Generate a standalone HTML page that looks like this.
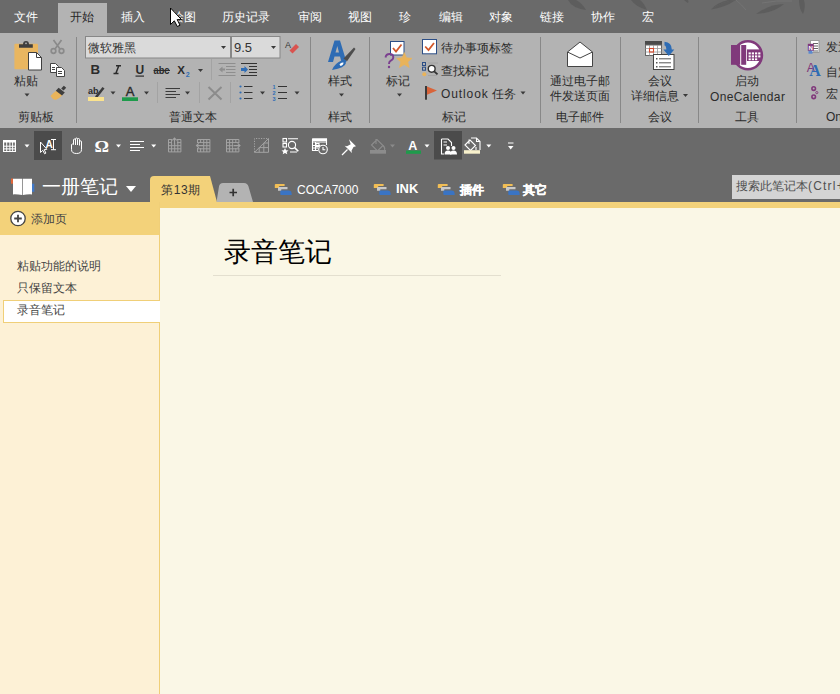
<!DOCTYPE html>
<html><head><meta charset="utf-8">
<style>
*{margin:0;padding:0;box-sizing:border-box}
html,body{width:840px;height:694px;overflow:hidden;background:#faf7e6;font-family:"Liberation Sans",sans-serif;}
.a{position:absolute}
.t{position:absolute;font-size:12px;line-height:16px;white-space:nowrap;color:#2b2b2b}
.w{color:#fff}
svg{position:absolute;left:0;top:0}
</style></head><body>
<!-- backgrounds -->
<div class="a" style="left:0;top:0;width:840px;height:33px;background:#6a6a6a"></div>
<div class="a" style="left:58px;top:3px;width:49px;height:30px;background:#b3b3b3"></div>
<div class="a" style="left:0;top:33px;width:840px;height:95px;background:#b3b3b3"></div>
<div class="a" style="left:0;top:128px;width:840px;height:74px;background:#6a6a6a"></div>
<div class="a" style="left:0;top:202px;width:840px;height:6px;background:#f3d27a"></div>
<div class="a" style="left:0;top:202px;width:160px;height:492px;background:#fdf1d6;border-right:1px solid #f0cf78"></div>
<div class="a" style="left:0;top:202px;width:159px;height:33px;background:#f3d27a"></div>
<div class="a" style="left:160px;top:208px;width:680px;height:486px;background:#faf7e6"></div>

<svg width="840" height="694" viewBox="0 0 840 694">
<g fill="#5d5d5d">
<path d="M568 0 Q572 8 586 10 Q582 3 576 0 Z"/>
<path d="M631 0 Q636 7 647 10 Q644 3 640 0 Z"/>
<path d="M711 9.5 Q720 2 736 0 H728 Q716 3 711 9.5 Z"/>
<path d="M711 9.5 Q724 8 736 0 Q722 1 711 9.5 Z"/>
<path d="M756 14 Q770 4 784 4 Q774 13 756 14 Z"/>
<path d="M799 0 Q799 9 803 14 Q806 7 804 0 Z"/>
<path d="M684 0 Q686 2 688 3 Q689 1 688 0 Z"/>
</g>
<path d="M736 0 Q742 5 746 10 M762 3 Q776 0 792 1" stroke="#747474" stroke-width="1" fill="none"/>
<!-- separators -->
<g fill="#888">
<rect x="76" y="37" width="1" height="86"/>
<rect x="310" y="37" width="1" height="86"/>
<rect x="369" y="37" width="1" height="86"/>
<rect x="540" y="37" width="1" height="86"/>
<rect x="620" y="37" width="1" height="86"/>
<rect x="698" y="37" width="1" height="86"/>
<rect x="796" y="37" width="1" height="86"/>
</g>
<g fill="#a3a3a3">
<rect x="211" y="59" width="1" height="21"/>
<rect x="157" y="82" width="1" height="21"/>
<rect x="199" y="82" width="1" height="21"/>
<rect x="230" y="82" width="1" height="21"/>
</g>
<!-- paste -->
<rect x="14.4" y="43.8" width="23.6" height="25.4" rx="1" fill="#e9b660"/>
<path d="M19 47.7 V44.3 H23 Q23 40.9 26 40.9 Q29 40.9 29 44.3 H32.8 V47.7 Z" fill="#3f3f3f"/>
<circle cx="26" cy="43.3" r="0.9" fill="#b3b3b3"/>
<path d="M28.5 52.5 H36.5 L41.5 57.5 V70 H28.5 Z" fill="#fff" stroke="#3f3f3f" stroke-width="1"/>
<path d="M36.5 52.5 V57.5 H41.5" fill="none" stroke="#3f3f3f" stroke-width="1"/>
<!-- scissors -->
<g stroke="#8a8a8a" stroke-width="1.7" fill="none">
<path d="M53.5 40 L60 49 M61.5 40 L55 49"/>
<circle cx="53.5" cy="51" r="2.3"/>
<circle cx="61.5" cy="51" r="2.3"/>
</g>
<!-- copy -->
<g stroke="#444" stroke-width="1" fill="#fff">
<path d="M50.5 63.5 H55.5 L58.5 66.5 V72.5 H50.5 Z"/>
<path d="M56.5 67.5 H61.5 L64.5 70.5 V76.5 H56.5 Z"/>
</g>
<g stroke="#444" stroke-width="1">
<path d="M52 67.5 H55 M52 69.5 H55 M58 71.5 H62 M58 73.5 H62"/>
</g>
<!-- format painter -->
<path d="M56.3 90.8 L62.3 95.3 Q59 99 55.5 100 Q52 99 50.5 96 Q53 93 56.3 90.8 Z" fill="#e9b45a"/>
<path d="M55.8 90.8 L58.6 87.8 L64.8 92.6 L62 95.6 Z" fill="#3e3e3e"/>
<path d="M61.2 88.6 L63.8 85.8 L66.2 87.8 L63.6 90.6 Z" fill="#3e3e3e"/>
<!-- font boxes -->
<rect x="85.5" y="36.5" width="145" height="21.5" fill="#dadada" stroke="#878787"/>
<rect x="231.5" y="36.5" width="48.5" height="21.5" fill="#dadada" stroke="#878787"/>
<!-- clear format -->
<text x="285" y="47.5" font-family="Liberation Sans" font-size="9" fill="#333">A</text>
<path d="M289.5 50.5 L296 44 L299 47 L292.5 53.5 Z" fill="#d9534f"/>
<!-- B I U abc x2 -->
<text x="90.5" y="74.3" font-family="Liberation Sans" font-weight="bold" font-size="13.3" fill="#2b2b2b">B</text>
<path d="M116 65.7 H121 M113.5 73.6 H118.5 M118.8 65.7 L115.8 73.6" stroke="#2b2b2b" stroke-width="1.5" fill="none"/>
<text x="135.5" y="74" font-family="Liberation Sans" font-weight="bold" font-size="12" fill="#2b2b2b">U</text>
<rect x="135.5" y="75.5" width="8.5" height="1.2" fill="#2b2b2b"/>
<text x="153.5" y="74" font-family="Liberation Sans" font-weight="bold" font-size="10" fill="#2b2b2b" textLength="16" lengthAdjust="spacingAndGlyphs">abc</text>
<rect x="153.5" y="70" width="16.5" height="1" fill="#2b2b2b"/>
<text x="177.3" y="74" font-family="Liberation Sans" font-weight="bold" font-size="11.5" fill="#2b2b2b">X</text>
<text x="185.8" y="76.5" font-family="Liberation Sans" font-weight="bold" font-size="7" fill="#2f6db5">2</text>
<!-- highlighter -->
<text x="88" y="94" font-family="Liberation Sans" font-weight="bold" font-size="9" fill="#2b2b2b">ab</text>
<path d="M95 96.5 L102.5 87 L104.5 88.5 L97 98 Z" fill="#3b3b3b"/>
<rect x="88" y="97" width="16" height="4" fill="#fbe38e"/>
<!-- font color -->
<text x="125.8" y="96" font-family="Liberation Sans" font-size="13" fill="#2b2b2b" stroke="#2b2b2b" stroke-width="0.4">A</text>
<rect x="122" y="97.3" width="16" height="3.7" fill="#1e9b4b"/>
<!-- align -->
<g fill="#3b3b3b">
<rect x="165.5" y="88" width="14.5" height="1"/>
<rect x="165.5" y="91" width="10.5" height="1"/>
<rect x="165.5" y="94" width="14.5" height="1"/>
<rect x="165.5" y="97" width="10.5" height="1"/>
</g>
<!-- clear X -->
<path d="M208.5 87 L221.5 99.5 M221.5 87 L208.5 99.5" stroke="#8c8c8c" stroke-width="2"/>
<!-- decrease indent (disabled) -->
<g fill="#8e8e8e">
<rect x="218.5" y="63" width="17" height="1"/>
<rect x="226" y="66" width="9.5" height="1"/>
<rect x="226" y="69" width="9.5" height="1"/>
<rect x="226" y="72" width="9.5" height="1"/>
<rect x="218.5" y="75" width="17" height="1"/>
<path d="M219 69.5 L222.5 66.5 V68.5 H225 V70.5 H222.5 V72.5 Z"/>
</g>
<!-- increase indent -->
<g fill="#333">
<rect x="241" y="63" width="16" height="1"/>
<rect x="249" y="66" width="8" height="1"/>
<rect x="249" y="69" width="8" height="1"/>
<rect x="249" y="72" width="8" height="1"/>
<rect x="241" y="75" width="16" height="1"/>
</g>
<path d="M248 69.5 L244.5 66 V68 H241 V71 H244.5 V73 Z" fill="#2f6db5"/>
<!-- bullets -->
<g fill="#2f6db5"><circle cx="240.5" cy="86.5" r="1.1"/><circle cx="240.5" cy="92.5" r="1.1"/><circle cx="240.5" cy="98.5" r="1.1"/></g>
<g fill="#333"><rect x="244" y="86" width="8.5" height="1"/><rect x="244" y="92" width="8.5" height="1"/><rect x="244" y="98" width="8.5" height="1"/></g>
<!-- numbering -->
<g fill="#2f6db5" font-family="Liberation Sans" font-weight="bold" font-size="5.5">
<text x="272.5" y="89">1</text><text x="272.5" y="95">2</text><text x="272.5" y="101">3</text></g>
<g fill="#333"><rect x="278" y="86" width="9" height="1"/><rect x="278" y="92" width="9" height="1"/><rect x="278" y="98" width="9" height="1"/></g>
<!-- dropdown arrows -->
<g fill="#3a3a3a">
<path d="M24.5 93.5 H29.5 L27 96.5 Z"/>
<path d="M221 46 H226 L223.5 49 Z"/>
<path d="M271 46 H276 L273.5 49 Z"/>
<path d="M198 69 H203 L200.5 72 Z"/>
<path d="M110.5 91.5 H115.5 L113 94.5 Z"/>
<path d="M144 91.5 H149 L146.5 94.5 Z"/>
<path d="M185 91.5 H190 L187.5 94.5 Z"/>
<path d="M260 91.5 H265 L262.5 94.5 Z"/>
<path d="M294.5 91.5 H299.5 L297 94.5 Z"/>
<path d="M339 93.5 H344 L341.5 96.5 Z"/>
<path d="M397 93.5 H402 L399.5 96.5 Z"/>
<path d="M520.5 91.5 H525.5 L523 94.5 Z"/>
<path d="M683 94 H688 L685.5 97 Z"/>
</g>
<!-- styles A -->
<path d="M328 62 L334.5 40.5 H340 L346.5 62 H341.5 L340 56.5 H334.5 L333 62 Z M335.5 52.5 H339 L337.3 46 Z" fill="#2e6cb4"/>
<path d="M343.5 58.5 L354 47.5 L355.5 49 L347 61.3 Z" fill="#4d4d4d"/>
<path d="M332 70 Q334.5 63.5 341.5 60.5 Q345.5 60 346 63 Q345 68 332 70 Z" fill="#2e6cb4"/>
<path d="M339.5 64.5 Q341 62 343.5 62.5 Q343.5 65 340.5 66 Z" fill="#fff"/>
<!-- tag big -->
<rect x="390.5" y="41.5" width="13.5" height="13.5" fill="#fff" stroke="#2c4e86"/>
<path d="M393 48 L396 51.5 L401.5 44.5" fill="none" stroke="#d2572a" stroke-width="1.8"/>
<path d="M385.5 57.5 Q386 54 389.5 54 Q393.3 54 393.3 57.2 Q393.3 59.5 390.5 60.8 Q389 61.6 389 64" fill="none" stroke="#7b3f8f" stroke-width="1.9"/><circle cx="389" cy="67" r="1.2" fill="#7b3f8f"/>
<path d="M404.3 52.5 L406.5 57.8 L412 58.3 L407.8 62 L409.2 67.6 L404.3 64.6 L399.4 67.6 L400.8 62 L396.6 58.3 L402.1 57.8 Z" fill="#e9b35a" stroke="#e9b35a" stroke-width="0.6" stroke-linejoin="round"/>
<!-- small checkbox -->
<rect x="422.5" y="39.5" width="14" height="14.3" fill="#fff" stroke="#2c4e86"/>
<path d="M425.2 46.5 L428.5 50 L434 43" fill="none" stroke="#d2572a" stroke-width="1.8"/>
<!-- find tags -->
<g fill="none" stroke="#2c4e86" stroke-width="1"><rect x="422.5" y="62.5" width="3" height="3"/><rect x="422.5" y="67.2" width="3" height="3"/></g>
<circle cx="424.3" cy="74.3" r="2" fill="#e9b35a"/>
<path d="M428 63 H438 M428 75.5 H437" stroke="#a0a0a0" stroke-width="0.8"/>
<circle cx="431.7" cy="68.8" r="3.4" fill="#fff" stroke="#333" stroke-width="1.4"/>
<path d="M434.2 71.3 L437.5 74.4" stroke="#333" stroke-width="1.8"/>
<!-- flag -->
<rect x="425" y="86" width="2" height="13.7" fill="#3b3b3b"/>
<path d="M427 86.5 L437 90.5 L427 94.8 Z" fill="#d9643a"/>
<!-- envelope -->
<path d="M567.5 52 L580 42 L592.5 52 V66.5 H567.5 Z" fill="#fff" stroke="#444" stroke-width="1"/>
<path d="M567.5 52 L580 58 L592.5 52" fill="none" stroke="#444" stroke-width="1"/>
<!-- meeting -->
<rect x="645" y="41" width="17" height="4" fill="#4a4a4a"/>
<rect x="645.5" y="45" width="16" height="10.5" fill="#fff" stroke="#666" stroke-width="1"/>
<g stroke="#999" stroke-width="0.8"><path d="M649.5 45 V55.5 M653.5 45 V55.5 M657.5 45 V55.5 M645.5 48.5 H661.5 M645.5 52 H661.5"/></g>
<rect x="649.5" y="48.5" width="4" height="3.5" fill="none" stroke="#d9492b" stroke-width="1.1"/>
<rect x="653.5" y="54.5" width="20.5" height="15" fill="#fff" stroke="#444" stroke-width="1"/>
<g fill="#555"><rect x="656" y="58" width="1.5" height="1.5"/><rect x="656" y="62" width="1.5" height="1.5"/><rect x="656" y="66" width="1.5" height="1.5"/>
<rect x="659" y="58.3" width="12" height="1"/><rect x="659" y="62.3" width="12" height="1"/><rect x="659" y="66.3" width="12" height="1"/></g>
<path d="M664.5 41.8 Q671.8 42.3 671.8 49.6 L674.3 49.6 L668.8 56 L663.4 49.6 L666.3 49.6 Q666.3 45.8 664.5 45.5 Z" fill="#2e6cb4"/>
<!-- onecalendar -->
<circle cx="747.9" cy="55.2" r="14" fill="#fff" stroke="#80397b" stroke-width="2.6"/>
<rect x="731" y="45" width="9.2" height="19.8" fill="#80397b"/>
<rect x="741.2" y="45" width="5" height="19.8" fill="#80397b"/>
<rect x="747" y="49.4" width="14.3" height="11.6" fill="#80397b"/>
<g fill="#fff">
<rect x="748.6" y="52.4" width="2.2" height="2"/><rect x="751.8" y="52.4" width="2.2" height="2"/><rect x="755" y="52.4" width="2.2" height="2"/><rect x="758.2" y="52.4" width="2.2" height="2"/>
<rect x="748.6" y="55.4" width="2.2" height="2"/><rect x="751.8" y="55.4" width="2.2" height="2"/><rect x="755" y="55.4" width="2.2" height="2"/><rect x="758.2" y="55.4" width="2.2" height="2"/>
<rect x="748.6" y="58.4" width="2.2" height="1.8"/><rect x="751.8" y="58.4" width="2.2" height="1.8"/><rect x="755" y="58.4" width="2.2" height="1.8"/>
</g>
<!-- right small icons -->
<rect x="810.5" y="40.5" width="8.5" height="12" fill="#fff" stroke="#9a9a9a" stroke-width="1"/>
<g fill="#666"><rect x="813" y="43" width="5" height="1"/><rect x="813" y="45.5" width="5" height="1"/><rect x="813" y="48" width="5" height="1"/><rect x="813" y="50.5" width="5" height="1"/></g>
<rect x="807.8" y="43.8" width="6" height="7" fill="#80397b"/>
<text x="808.6" y="50" font-family="Liberation Sans" font-weight="bold" font-size="6" fill="#fff">N</text>
<rect x="808.5" y="50.7" width="4" height="3" fill="#5a8ad0"/>
<text x="806.8" y="71.5" font-family="Liberation Sans" font-size="12.5" fill="#80397b">A</text>
<text x="809.3" y="76.4" font-family="Liberation Serif" font-weight="bold" font-size="16" fill="#2e6cb4">A</text>
<g fill="none" stroke="#80397b" stroke-width="1.6"><circle cx="813.7" cy="88.6" r="1.8"/><circle cx="813.7" cy="96.8" r="1.8"/></g>
<circle cx="816.8" cy="92.6" r="1.1" fill="none" stroke="#80397b" stroke-width="0.9"/>
<!-- QAT row -->
<rect x="34" y="131" width="28" height="29" fill="#4b4b4b"/>
<rect x="434" y="131" width="28" height="28.5" fill="#4b4b4b"/>
<!-- table icon -->
<g fill="#fff">
<rect x="3" y="140" width="13" height="2.5"/>
<rect x="3" y="140" width="1.2" height="12"/><rect x="14.8" y="140" width="1.2" height="12"/>
<rect x="3" y="151" width="13" height="1"/><rect x="3" y="145.7" width="13" height="1"/><rect x="3" y="148.4" width="13" height="1"/>
<rect x="6.2" y="140" width="1" height="12"/><rect x="9.4" y="140" width="1" height="12"/><rect x="12.1" y="140" width="1" height="12"/>
</g>
<g fill="#fff">
<path d="M24.5 144.5 H29.5 L27 147.5 Z"/>
<path d="M116 144.5 H121 L118.5 147.5 Z"/>
<path d="M151.2 144.5 H156.2 L153.7 147.5 Z"/>
<path d="M424.5 144.5 H429.5 L427 147.5 Z"/>
<path d="M486.3 144.5 H491.3 L488.8 147.5 Z"/>
<path d="M508 146 H513.5 L510.7 149.5 Z"/><rect x="508" y="142.5" width="5.5" height="1"/>
</g>
<path d="M390 144.5 H395 L392.5 147.5 Z" fill="#8a8a8a"/>
<!-- cursor AI -->
<path d="M40.5 142 V152.5 L42.8 150.3 L44.6 153.8 L45.9 153.1 L44.2 149.6 L46.9 149.3 Z" fill="none" stroke="#fff" stroke-width="1"/>
<text x="45.5" y="147.8" font-family="Liberation Sans" font-weight="bold" font-size="10" fill="#fff">A</text>
<rect x="51" y="139" width="5" height="1" fill="#fff"/><rect x="51" y="149.2" width="5" height="1" fill="#fff"/><rect x="53" y="139.5" width="1" height="10.2" fill="#fff"/>
<!-- hand -->
<path d="M71.5 144.5 V149.5 Q71.5 153.5 76.5 153.5 Q81.5 153.5 81.5 149.5 V142 Q81.5 140.8 80.5 140.8 Q79.5 140.8 79.5 142 V139.5 Q79.5 138.5 78.5 138.5 Q77.5 138.5 77.5 139.5 V139 Q77.5 138 76.5 138 Q75.5 138 75.5 139 V140 Q75.5 139 74.5 139 Q73.5 139 73.5 140 V144.5 Q72.5 143.5 71.5 144.5 Z M75.5 140 V145 M77.5 139.5 V145 M79.5 142 V145.5" fill="none" stroke="#fff" stroke-width="1"/>
<!-- omega -->
<text x="94.6" y="151.9" font-family="Liberation Serif" font-weight="bold" font-size="17" fill="#fff" textLength="14.5" lengthAdjust="spacingAndGlyphs">Ω</text>
<!-- align -->
<g fill="#fff">
<rect x="130" y="141" width="14" height="1"/><rect x="130" y="144" width="10" height="1"/>
<rect x="130" y="147" width="14" height="1"/><rect x="130" y="150" width="10" height="1"/>
</g>
<!-- disabled table icons -->
<g stroke="#a3a3a3" stroke-width="1" fill="none">
<path d="M168.5 139.5 H180.9 V151.9 H168.5 Z M171.6 139.5 V151.9 M168.5 142.6 H180.9 M174.7 139.5 V151.9 M168.5 145.7 H180.9 M177.8 139.5 V151.9 M168.5 148.8 H180.9"/>
<path d="M197.5 139.5 H209.9 V151.9 H197.5 Z M200.6 139.5 V151.9 M197.5 142.6 H209.9 M203.7 139.5 V151.9 M197.5 145.7 H209.9 M206.8 139.5 V151.9 M197.5 148.8 H209.9"/>
<path d="M226.5 139.5 H238.9 V151.9 H226.5 Z M229.6 139.5 V151.9 M226.5 142.6 H238.9 M232.7 139.5 V151.9 M226.5 145.7 H238.9 M235.8 139.5 V151.9 M226.5 148.8 H238.9"/>
</g>
<rect x="172" y="137" width="5" height="6.5" fill="#6a6a6a"/><path d="M174.5 144.5 V138 M172.3 140.3 L174.5 138 L176.7 140.3" stroke="#a3a3a3" stroke-width="1.1" fill="none"/>
<rect x="195.5" y="143" width="7.5" height="5" fill="#6a6a6a"/><path d="M203 145.6 H196.5 M198.8 143.4 L196.5 145.6 L198.8 147.8" stroke="#a3a3a3" stroke-width="1.1" fill="none"/>
<rect x="233" y="143" width="7.5" height="5" fill="#6a6a6a"/><path d="M233.5 145.6 H240 M237.7 143.4 L240 145.6 L237.7 147.8" stroke="#a3a3a3" stroke-width="1.1" fill="none"/>
<path d="M254.5 152 V138.5 H268.5" stroke="#a3a3a3" stroke-width="1" fill="none" stroke-dasharray="1.2 1.3"/>
<path d="M254.5 152.3 L268.5 138.5 V152.3 Z M259.2 152.3 V147.6 M263.8 152.3 V143 M259.2 147.6 H268.5 M263.8 143 H268.5" stroke="#a3a3a3" stroke-width="1" fill="none"/>
<!-- find tags white -->
<g stroke="#fff" stroke-width="1.1" fill="none">
<rect x="283" y="138.5" width="3.5" height="3.5"/><rect x="283" y="143.5" width="3.5" height="3.5"/>
<path d="M288 138.8 H298 M290 152 H297"/>
<circle cx="292" cy="145" r="3.6"/><path d="M294.6 147.6 L298.3 151.3" stroke-width="1.6"/>
</g>
<path d="M285 148 L286.1 150.3 L288.5 150.5 L286.7 152 L287.3 154.3 L285 153 L282.7 154.3 L283.3 152 L281.5 150.5 L283.9 150.3 Z" fill="#fff"/>
<!-- calendar clock -->
<g stroke="#fff" stroke-width="1.1" fill="none">
<path d="M312.5 139 H326.5 V145 M312.5 139 V150.5 H318"/>
<path d="M312.5 142 H326.5 M315.5 142 V150.5 M312.5 145.5 H320 M312.5 148 H318"/>
<rect x="316" y="143.5" width="3" height="3"/>
<circle cx="323" cy="149.5" r="4.3" fill="#6a6a6a"/><path d="M323 147 V149.8 H325.3"/>
</g>
<rect x="312" y="138.5" width="15" height="2.5" fill="#fff"/>
<!-- pin -->
<path d="M349 139.3 L356 146.3 L353.5 147 L351.5 150.8 L352 153 L344.7 145.8 L347 146.3 L350.7 144.3 Z" fill="#fff"/>
<path d="M347.5 149.5 L342 155" stroke="#fff" stroke-width="1.3"/>
<!-- bucket disabled -->
<g stroke="#8c8c8c" stroke-width="1.1" fill="none"><path d="M371.5 145 L377 139.5 L383 145.5 L377.5 151 Z M376 139 V144"/><path d="M383 145.5 Q385.5 148 384.5 150"/></g>
<rect x="370" y="150" width="16" height="3.7" fill="#8c8c8c"/>
<!-- font color A white -->
<text x="408.3" y="150.2" font-family="Liberation Sans" font-weight="bold" font-size="12.5" fill="#fff">A</text>
<rect x="406" y="150.5" width="15" height="3.3" fill="#1e9b4b"/>
<!-- doc people -->
<g stroke="#fff" stroke-width="1.1" fill="none"><path d="M441.5 139 H448 L451.5 142.5 V146 M441.5 139 V154 H444"/><path d="M443.5 142 H447 M443.5 145 H447"/></g>
<g fill="#fff"><circle cx="448" cy="148" r="2"/><path d="M444.5 154.5 Q444.5 150.5 448 150.5 Q451.5 150.5 451.5 154.5 Z"/>
<circle cx="453.5" cy="148" r="2"/><path d="M450 154.5 Q450 150.5 453.5 150.5 Q457 150.5 457 154.5 Z"/></g>
<!-- page color -->
<g stroke="#fff" stroke-width="1.1" fill="none"><path d="M471 138 H476.5 L480 141.5 V150 M476.5 138 V141.5 H480"/><path d="M465 145 L470 140 L475.5 145.5 L470.5 150.5 Z M469 139.5 V144"/><path d="M476 147 V150"/></g>
<rect x="464" y="150.2" width="16" height="3.5" fill="#f8f1cc"/>
<!-- notebook book icon -->
<path d="M13 178.8 H22.3 V195 Q17 194.2 13 194.4 Z" fill="#fff"/>
<path d="M23 178.8 H32 V194.4 Q27 194.2 23 195 Z" fill="#fff"/>
<rect x="11" y="178.5" width="2" height="5.2" fill="#e0663a"/>
<rect x="32" y="183.7" width="2.3" height="8.1" fill="#3f78c8"/>
<path d="M126 186 H136 L131 192 Z" fill="#fff"/>
<!-- section tabs -->
<path d="M150 202 V180 Q150 176 154 176 H210 L217 202 Z" fill="#f3d27a"/>
<path d="M216.5 202 L219 186.5 Q219.5 183 223 183 H244 Q247.5 183 248.5 186.5 L253 202 Z" fill="#b3b3b3"/>
<path d="M229.5 192.5 H237 M233.2 188.8 V196.3" stroke="#333" stroke-width="1.7"/>
<!-- section group icons -->
<g id="sg">
<path d="M274.8 184.8 Q274.8 183.9 275.8 183.9 H284.6 V185.9 H279.2 V187.9 H274.8 Z" fill="#f2be55"/>
<path d="M278 188 Q278 187.1 279 187.1 H287.5 V189.3 H281.3 V190.8 H278 Z" fill="#c8c8c8"/>
<path d="M280.3 191.5 Q280.3 190.5 281.5 190.5 H289 Q291.6 190.7 291.6 193 V195 H281 Q280.3 195 280.3 194 Z" fill="#3a74c4"/>
</g>
<use href="#sg" x="99" y="0"/>
<use href="#sg" x="163" y="0"/>
<use href="#sg" x="228" y="0"/>
<!-- add page icon -->
<circle cx="18" cy="218.5" r="7.2" fill="#fff" stroke="#444" stroke-width="1.3"/>
<path d="M14.2 218.5 H21.8 M18 214.7 V222.3" stroke="#444" stroke-width="1.8"/>
</svg>

<!-- tabs text -->
<div class="t w" style="left:14px;top:9px">文件</div>
<div class="t" style="left:70px;top:9px;color:#262626">开始</div>
<div class="t w" style="left:121px;top:9px">插入</div>
<div class="t w" style="left:172px;top:9px">绘图</div>
<div class="t w" style="left:222px;top:9px">历史记录</div>
<div class="t w" style="left:298px;top:9px">审阅</div>
<div class="t w" style="left:348px;top:9px">视图</div>
<div class="t w" style="left:399px;top:9px">珍</div>
<div class="t w" style="left:439px;top:9px">编辑</div>
<div class="t w" style="left:489px;top:9px">对象</div>
<div class="t w" style="left:540px;top:9px">链接</div>
<div class="t w" style="left:591px;top:9px">协作</div>
<div class="t w" style="left:642px;top:9px">宏</div>

<!-- ribbon text -->
<div class="t" style="left:14px;top:73px">粘贴</div>
<div class="t" style="left:18px;top:109px">剪贴板</div>
<div class="t" style="left:88px;top:40px;color:#333">微软雅黑</div>
<div class="t" style="left:234px;top:40px;font-size:13px;color:#333">9.5</div>
<div class="t" style="left:169px;top:109px">普通文本</div>
<div class="t" style="left:328px;top:73px">样式</div>
<div class="t" style="left:328px;top:109px">样式</div>
<div class="t" style="left:386px;top:73px">标记</div>
<div class="t" style="left:441px;top:40px">待办事项标签</div>
<div class="t" style="left:441px;top:63px">查找标记</div>
<div class="t" style="left:441px;top:86px"><span style="letter-spacing:0.9px">Outlook</span> 任务</div>
<div class="t" style="left:442px;top:109px">标记</div>
<div class="t" style="left:550px;top:73px">通过电子邮</div>
<div class="t" style="left:550px;top:88px">件发送页面</div>
<div class="t" style="left:556px;top:109px">电子邮件</div>
<div class="t" style="left:648px;top:73px">会议</div>
<div class="t" style="left:631px;top:88px">详细信息</div>
<div class="t" style="left:648px;top:109px">会议</div>
<div class="t" style="left:735px;top:73px">启动</div>
<div class="t" style="left:710px;top:89px;letter-spacing:0.35px">OneCalendar</div>
<div class="t" style="left:735px;top:109px">工具</div>
<div class="t" style="left:826px;top:39px">发送</div>
<div class="t" style="left:826px;top:64px">自定</div>
<div class="t" style="left:826px;top:86px">宏</div>
<div class="t" style="left:826px;top:109px">On</div>

<!-- notebook row -->
<div class="t w" style="left:42px;top:175px;font-size:19px;line-height:24px">一册笔记</div>
<div class="t" style="left:161px;top:182px;color:#333;letter-spacing:0.7px">第13期</div>
<div class="t w" style="left:297px;top:182px">COCA7000</div>
<div class="t w" style="left:396px;top:181px;font-weight:bold;font-size:13px">INK</div>
<div class="t w" style="left:460px;top:182px;font-weight:bold;-webkit-text-stroke:0.35px #fff">插件</div>
<div class="t w" style="left:523px;top:182px;font-weight:bold;-webkit-text-stroke:0.35px #fff">其它</div>
<div class="a" style="left:732px;top:175px;width:108px;height:24px;background:#d4d4d4"></div>
<div class="t" style="left:736px;top:178px;color:#505050">搜索此笔记本<span style="letter-spacing:1.2px">(Ctrl+E)</span></div>

<!-- pages -->
<div class="t" style="left:31px;top:211px;color:#444">添加页</div>
<div class="a" style="left:3px;top:300px;width:157px;height:23px;background:#fff;border:1px solid #f0cf78;border-right:none"></div>
<div class="t" style="left:17px;top:258px;color:#444">粘贴功能的说明</div>
<div class="t" style="left:17px;top:280px;color:#444">只保留文本</div>
<div class="t" style="left:17px;top:302px;color:#444">录音笔记</div>

<div class="t" style="left:224px;top:235px;font-size:27px;line-height:34px;color:#000">录音笔记</div>
<div class="a" style="left:213px;top:275px;width:288px;height:1px;background:#e3dfcf"></div>
<svg width="840" height="694" viewBox="0 0 840 694" style="position:absolute;left:0;top:0">
<!-- mouse cursor -->
<path d="M170.5 8 V24.5 L174.3 20.8 L177.3 26.5 L180 25.2 L177.2 19.6 L181.5 19.6 Z" fill="#fff" stroke="#000" stroke-width="1"/>
</svg>
</body></html>
